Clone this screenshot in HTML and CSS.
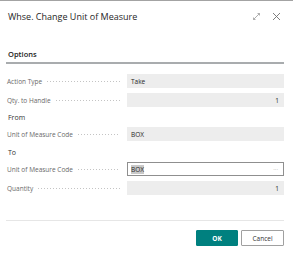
FILE: index.html
```html
<!DOCTYPE html>
<html lang="en">
<head>
    <meta charset="UTF-8">
    <title>Whse. Change Unit of Measure</title>
    <link rel="stylesheet" href="styles.css">
</head>
<body>
    <div class="dialog">
        <div class="dialog-header">
            <div class="dialog-title">Whse. Change Unit of Measure</div>
            <div class="header-icons">
                <svg class="icon" width="9" height="9" viewBox="0 0 9 9">
                    <path d="M1.5 7.5 L7.5 1.5 M5.5 1.5 H7.5 V3.5 M1.5 5.5 V7.5 H3.5" stroke="#9a9a9a" stroke-width="0.8" fill="none"/>
                </svg>
                <svg class="icon" width="9" height="9" viewBox="0 0 9 9">
                    <path d="M1 1 L8 8 M8 1 L1 8" stroke="#707070" stroke-width="0.9" fill="none"/>
                </svg>
            </div>
        </div>

        <div class="section-title">Options</div>

        <div class="row">
            <div class="label">Action Type</div>
            <div class="field">Take</div>
        </div>
        <div class="row">
            <div class="label">Qty. to Handle</div>
            <div class="field number">1</div>
        </div>

        <div class="group-title">From</div>
        <div class="row">
            <div class="label">Unit of Measure Code</div>
            <div class="field">BOX</div>
        </div>

        <div class="group-title to">To</div>
        <div class="row">
            <div class="label">Unit of Measure Code</div>
            <div class="field editable"><span class="selected">BOX</span><span class="more">···</span></div>
        </div>
        <div class="row">
            <div class="label">Quantity</div>
            <div class="field number">1</div>
        </div>

        <div class="footer">
            <button class="btn btn-ok">OK</button>
            <button class="btn btn-cancel">Cancel</button>
        </div>
    </div>
</body>
</html>
```

FILE: styles.css
```css
body {
    margin: 0;
    font-family: "Open Sans", "Noto Sans", sans-serif;
    color: #212121;
    background: #fff;
}

.dialog {
    border-top: 1px solid #a3a3a3;
    height: 259px;
    padding: 0 9px 0 6px;
}

.dialog-header {
    display: flex;
    justify-content: space-between;
    align-items: center;
    height: 31px;
    padding-left: 2px;
}

.dialog-title {
    font-size: 9px;
    color: #262626;
}

.header-icons {
    display: flex;
    gap: 11px;
    align-items: center;
    margin-right: 3px;
}

.icon {
    display: block;
}

.section-title {
    margin-top: 16px;
    font-size: 7.5px;
    font-weight: 600;
    padding: 0 0 2px 2px;
    border-bottom: 2px solid #a9acae;
    line-height: 12px;
}

.row {
    display: flex;
    align-items: center;
    margin-top: 5px;
}

.section-title + .row {
    margin-top: 10px;
}

.label {
    width: 113px;
    margin-right: 7px;
    padding-left: 1px;
    font-size: 6.5px;
    color: #6a6a6a;
    white-space: nowrap;
    overflow: hidden;
    display: flex;
    align-items: center;
}

.label::after {
    content: "";
    flex: 1;
    margin-left: 4px;
    height: 1px;
    background-image: radial-gradient(circle, #c4c4c4 0.5px, transparent 0.6px);
    background-size: 3px 1px;
}

.field {
    flex: 1;
    height: 14px;
    box-sizing: border-box;
    background: #ededed;
    font-size: 6.5px;
    color: #262626;
    display: flex;
    align-items: center;
    padding: 0 5px 0 4px;
}

.field.number {
    justify-content: flex-end;
}

.field.editable {
    background: #fff;
    border: 1px solid #8f8f8f;
    justify-content: space-between;
    padding-left: 3px;
}

.selected {
    background: #c9c9c9;
}

.more {
    color: #9a9a9a;
    font-size: 6px;
}

.group-title {
    font-size: 7px;
    color: #333;
    padding: 6px 0 0 2px;
    line-height: 9px;
}

.group-title.to {
    padding-top: 7px;
}

.footer {
    margin-top: 25px;
    border-top: 1px solid #e6e6e6;
    padding-top: 9px;
    display: flex;
    justify-content: flex-end;
    gap: 3px;
}

.btn {
    height: 16px;
    width: 43px;
    font-family: "Open Sans", "Noto Sans", sans-serif;
    font-size: 6.5px;
    padding: 0;
    border-radius: 1px;
    cursor: pointer;
}

.btn-ok {
    width: 42px;
    background: #00807f;
    border: 1px solid #00807f;
    color: #fff;
    font-weight: 700;
}

.btn-cancel {
    background: #fff;
    border: 1px solid #a0a0a0;
    color: #333;
}
```
